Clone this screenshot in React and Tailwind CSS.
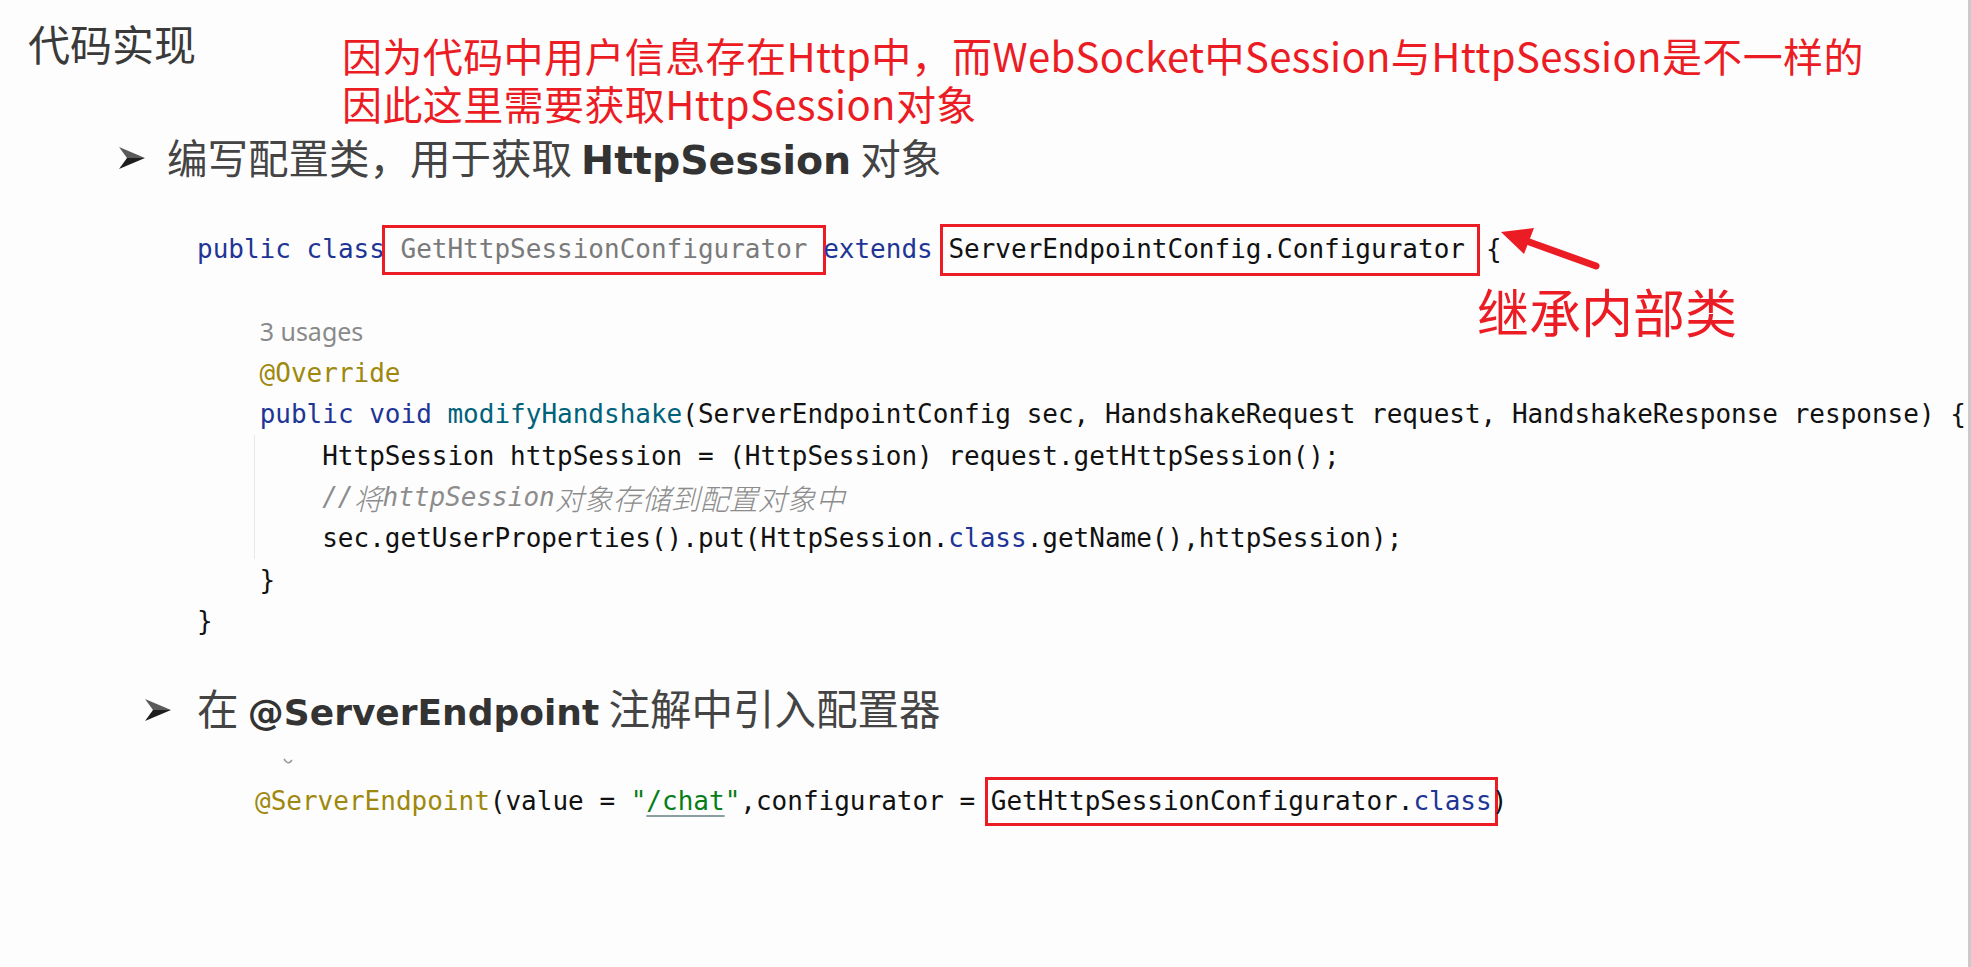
import React from 'react';

const mono = { fontFamily: '"DejaVu Sans Mono", "Noto Sans CJK SC", monospace' };
const cjk = { fontFamily: '"Noto Sans CJK SC", "Noto Sans", sans-serif' };
const bold = { fontFamily: '"DejaVu Sans", "Noto Sans CJK SC", sans-serif' };

const Bullet = () => (
  <svg width="26" height="24" viewBox="0 0 26 24" className="shrink-0">
    <polygon points="0,1 26,12 8,12" fill="#5a5a5a" />
    <polygon points="8,12 26,12 0,23" fill="#1e1e1e" />
  </svg>
);

// single code line, fixed height so that boxes can overflow it
const Line = ({ children, className = '' }) => (
  <div className={'flex items-center h-[41.3px] whitespace-pre ' + className}>{children}</div>
);

const kw = 'text-[#1f3596]';

const App = () => {
  return (
    <div className="relative w-[1971px] h-[967px] bg-[#fdfdfd] border-r-[3px] border-[#cacaca] overflow-hidden text-[#111]">
      {/* title + red note */}
      <div className="flex pt-[19px]">
        <div className="w-[342px] pl-[28px] text-[42px] leading-[48px] text-[#3a3a3a]" style={cjk}>
          代码实现
        </div>
        <div className="mt-[12px] text-[40px] leading-[48px] tracking-[0.4px] text-[#ec1c24]" style={cjk}>
          <div>因为代码中用户信息存在Http中，而WebSocket中Session与HttpSession是不一样的</div>
          <div>因此这里需要获取HttpSession对象</div>
        </div>
      </div>

      <div className="flex items-center h-[48px] mt-[7px] pl-[119px]">
        <Bullet />
        <div className="ml-[22px] text-[40.5px] leading-[48px] text-[#444]" style={cjk}>
          编写配置类，用于获取 <span className="font-bold text-[39.5px] text-[#333]" style={bold}>HttpSession</span> 对象
        </div>
      </div>

      <div className="mt-[47px] pl-[197px] text-[26px]" style={mono}>
        <Line>
          <span className={kw}>public class</span>
          <span className="inline-flex items-center h-[50px] -mx-[3px] border-[3px] border-[#ec1c24] text-[#7a7a7a]"> GetHttpSessionConfigurator </span>
          <span className={kw}>extends</span>
          <span> </span>
          <span className="inline-flex items-center h-[52px] -ml-[8px] pl-[5px] pr-[12px] border-[3px] border-[#ec1c24]">ServerEndpointConfig.Configurator</span>
          <span className="ml-[6px]">{'{'}</span>
        </Line>
        <Line />
        <Line>
          <span>    </span>
          <span className="text-[25px] text-[#8a8a8a]" style={{ fontFamily: '"Noto Sans", sans-serif' }}>3 usages</span>
        </Line>
        <Line className="text-[#9e880d]">{'    @Override'}</Line>
        <Line>
          <span>    </span>
          <span className={kw}>public void </span>
          <span className="text-[#00627a]">modifyHandshake</span>
          <span>(ServerEndpointConfig sec, HandshakeRequest request, HandshakeResponse response) {'{'}</span>
        </Line>
        <div className="ml-[57px] border-l border-[#e8e8e8]">
          <Line className="pl-[4.6px]">{'    HttpSession httpSession = (HttpSession) request.getHttpSession();'}</Line>
          <Line className="pl-[4.6px] italic text-[#8c8c8c]">
            <span>{'    //'}</span>
            <span className="text-[29px] font-light" style={cjk}>将</span>
            <span>httpSession</span>
            <span className="text-[29px] font-light" style={cjk}>对象存储到配置对象中</span>
          </Line>
          <Line className="pl-[4.6px]">
            <span>{'    sec.getUserProperties().put(HttpSession.'}</span>
            <span className={kw}>class</span>
            <span>.getName(),httpSession);</span>
          </Line>
        </div>
        <Line>{'    }'}</Line>
        <Line>{'}'}</Line>
      </div>

      <div className="flex items-center h-[48px] mt-[44px] pl-[145px]">
        <Bullet />
        <div className="ml-[26px] text-[41.5px] leading-[48px] text-[#444]" style={cjk}>
          在 <span className="font-bold text-[36px] text-[#333]" style={bold}>@ServerEndpoint</span> 注解中引入配置器
        </div>
      </div>

      <div className="h-[47px] pl-[282px] pt-[24px]">
        <svg width="12" height="8" viewBox="0 0 12 8">
          <path d="M2 1 Q6 8 10 2" stroke="#9a9a9a" strokeWidth="1.6" fill="none" />
        </svg>
      </div>

      <div className="pl-[255px] text-[26px]" style={mono}>
        <Line>
          <span className="text-[#9e880d]">@ServerEndpoint</span>
          <span>(value = </span>
          <span className="text-[#067d17]">"<span className="underline decoration-[#8aa0a0] underline-offset-[5px]">/chat</span>"</span>
          <span>,configurator = </span>
          <span className="inline-flex items-center h-[49px] -mx-[6px] px-[3px] border-[3px] border-[#ec1c24]">
            GetHttpSessionConfigurator.<span className={kw}>class</span>
          </span>
          <span>)</span>
        </Line>
      </div>

      {/* arrow + label */}
      <svg className="absolute left-[1495px] top-[222px]" width="112" height="52" viewBox="0 0 112 52">
        <line x1="101" y1="44" x2="30" y2="18.5" stroke="#ec1c24" strokeWidth="7" strokeLinecap="round" />
        <polygon points="6,10 39,6 29,32" fill="#ec1c24" />
      </svg>
      <div className="absolute left-[1477px] top-[281px] text-[52px] leading-[60px] text-[#ec1c24]" style={cjk}>
        继承内部类
      </div>
    </div>
  );
};

export default App;
